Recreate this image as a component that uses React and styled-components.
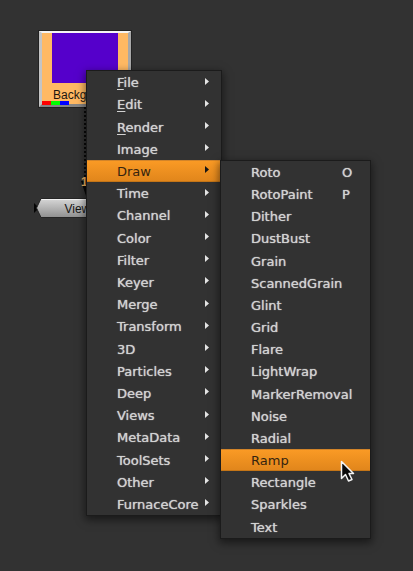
import React from "react";
import styled, { createGlobalStyle, css } from "styled-components";

const GlobalStyle = createGlobalStyle`
  *, *::before, *::after { box-sizing: border-box; }
  html, body, #root { height: 100%; }
  body { margin: 0; background: #323232; overflow: hidden; }
`;

const Canvas = styled.main`
  position: relative;
  width: 100%;
  height: 100%;
  background: #323232;
  color: #d2d2d2;
  font-family: "DejaVu Sans", Verdana, sans-serif;
  font-size: 13px;
`;

const BackgroundNode = styled.section`
  position: absolute;
  left: 39px;
  top: 31px;
  width: 92px;
  height: 76px;
  background: #ffb963;
  border: 3px solid;
  border-color: #f4f4f4 #a8a8a8 #858585 #c4c4c4;
  border-top-width: 2px;
  outline: 1px solid #222;
  display: flex;
  flex-direction: column;
  align-items: center;
`;

const Swatch = styled.div`
  width: 66px;
  height: 50px;
  background: #5500cb;
  flex: none;
`;

const NodeLabel = styled.span`
  font: 12px/24px "Liberation Sans", Arial, sans-serif;
  height: 18px;
  color: #1c1610;
`;

const Channels = styled.div`
  display: flex;
  align-self: flex-start;
  height: 4px;
`;

const Channel = styled.i`
  width: 9px;
  height: 4px;
  background: ${({ $color }) => $color};
`;

const Wire = styled.svg`
  position: absolute;
  left: 75px;
  top: 107px;
`;

const InputNumber = styled.span`
  position: absolute;
  left: 81px;
  top: 176px;
  font: bold 12px/12px "Liberation Sans", Arial, sans-serif;
  color: #f0b35f;
`;

const ViewerNode = styled.section`
  position: absolute;
  left: 33px;
  top: 197px;
  width: 96px;
  height: 22px;
  display: grid;
  place-items: center;

  svg, span { grid-area: 1 / 1; }
  span {
    position: relative;
    font: 12px/20px "Liberation Sans", Arial, sans-serif;
    color: #151515;
    padding: 2px 0 0 10px;
  }
`;

const panel = css`
  position: absolute;
  display: flex;
  flex-direction: column;
  margin: 0;
  padding: 0;
  list-style: none;
  background: #323232;
  border: 1px solid #1b1b1b;
  box-shadow: 0 3px 8px 1px rgba(0, 0, 0, 0.5);
`;

const MainMenu = styled.ul`
  ${panel}
  left: 86px;
  top: 70px;
  width: 136px;
  min-height: 446px;
`;

const SubMenu = styled.ul`
  ${panel}
  left: 133px;
  top: 0;
  width: 151px;
  min-height: 379px;
  z-index: 1;
`;

const Item = styled.li`
  position: relative;
  flex: 1;
  display: flex;
`;

const ItemButton = styled.button`
  flex: 1;
  display: flex;
  align-items: center;
  justify-content: space-between;
  min-height: 22px;
  margin: 0;
  padding: 2px ${({ $end }) => $end}px 0 30px;
  border: 0;
  background: none;
  color: inherit;
  font: inherit;
  line-height: 20px;
  text-align: left;
  white-space: nowrap;
  text-shadow: 0 0 1px #d2d2d2;

  ${({ $active }) =>
    $active &&
    css`
      background: linear-gradient(#fb9b25, #e0851b);
      box-shadow: inset 0 1px #d28429, inset 0 -1px #c47517;
      color: #35240f;
      text-shadow: none;
    `}

  u { text-underline-offset: 2px; }
`;

const Arrow = styled.svg`
  flex: none;
  margin-top: -4px;
`;

const Shortcut = styled.kbd`
  font: inherit;
  width: 12px;
`;

const Pointer = styled.svg`
  position: absolute;
  left: 339px;
  top: 459px;
  z-index: 2;
`;

const mainItems = [
  "File", "Edit", "Render", "Image", "Draw", "Time", "Channel", "Color",
  "Filter", "Keyer", "Merge", "Transform", "3D", "Particles", "Deep",
  "Views", "MetaData", "ToolSets", "Other", "FurnaceCore",
];
const mnemonics = ["File", "Edit", "Render"];

const drawItems = [
  "Roto", "RotoPaint", "Dither", "DustBust", "Grain", "ScannedGrain",
  "Glint", "Grid", "Flare", "LightWrap", "MarkerRemoval", "Noise",
  "Radial", "Ramp", "Rectangle", "Sparkles", "Text",
];
const shortcuts = { Roto: "O", RotoPaint: "P" };

function DrawMenu() {
  return (
    <SubMenu role="menu" aria-label="Draw">
      {drawItems.map((name) => (
        <Item key={name} role="none">
          <ItemButton role="menuitem" $end={16} $active={name === "Ramp"}>
            <span>{name}</span>
            {shortcuts[name] && <Shortcut>{shortcuts[name]}</Shortcut>}
          </ItemButton>
        </Item>
      ))}
    </SubMenu>
  );
}

export default function App() {
  return (
    <>
      <GlobalStyle />
      <Canvas>
        <BackgroundNode>
          <Swatch />
          <NodeLabel>Background</NodeLabel>
          <Channels>
            <Channel $color="#f00" />
            <Channel $color="#0f0" />
            <Channel $color="#00f" />
          </Channels>
        </BackgroundNode>
        <Wire width="20" height="92" viewBox="0 0 20 92" aria-hidden="true">
          <path d="M10.5 0V78" stroke="#080808" strokeWidth="3" strokeDasharray="2 2" />
          <path d="M6 74h9l-4 15z" fill="#080808" />
        </Wire>
        <InputNumber>1</InputNumber>
        <ViewerNode>
          <svg width="96" height="22" viewBox="0 0 96 22" aria-hidden="true">
            <defs>
              <linearGradient id="metal" x1="0" y1="0" x2="0" y2="1">
                <stop offset="0" stopColor="#d8d8d8" />
                <stop offset="1" stopColor="#8f8f8f" />
              </linearGradient>
            </defs>
            <path d="M1 6l5 5-5 5z" fill="#050505" />
            <path d="M8 1.500H88L93 11 88 20.500H8L3.500 11z" fill="url(#metal)" stroke="#252525" />
            <path d="M8.500 2.500H88" stroke="#f0f0f0" />
          </svg>
          <span>Viewer1</span>
        </ViewerNode>
        <MainMenu role="menu" aria-label="Node">
          {mainItems.map((name) => (
            <Item key={name} role="none">
              <ItemButton
                role="menuitem"
                aria-haspopup="menu"
                $end={12}
                $active={name === "Draw"}
              >
                <span>
                  {mnemonics.includes(name) ? (
                    <><u>{name[0]}</u>{name.slice(1)}</>
                  ) : name}
                </span>
                <Arrow width="4" height="7" viewBox="0 0 4 7" aria-hidden="true">
                  <path d="M0 0l4 3.500-4 3.500z" fill={name === "Draw" ? "#161616" : "#e4e4e4"} />
                </Arrow>
              </ItemButton>
              {name === "Draw" && <DrawMenu />}
            </Item>
          ))}
        </MainMenu>
        <Pointer width="18" height="25" viewBox="0 0 18 25" aria-hidden="true">
          <path
            d="M2.500 2.500v17l4-4 3 6.500 3.500-1.500-3-6H14.500z"
            fill="#0a0a0a"
            stroke="#f4f4f4"
            strokeWidth="1.500"
            strokeLinejoin="round"
          />
        </Pointer>
      </Canvas>
    </>
  );
}
